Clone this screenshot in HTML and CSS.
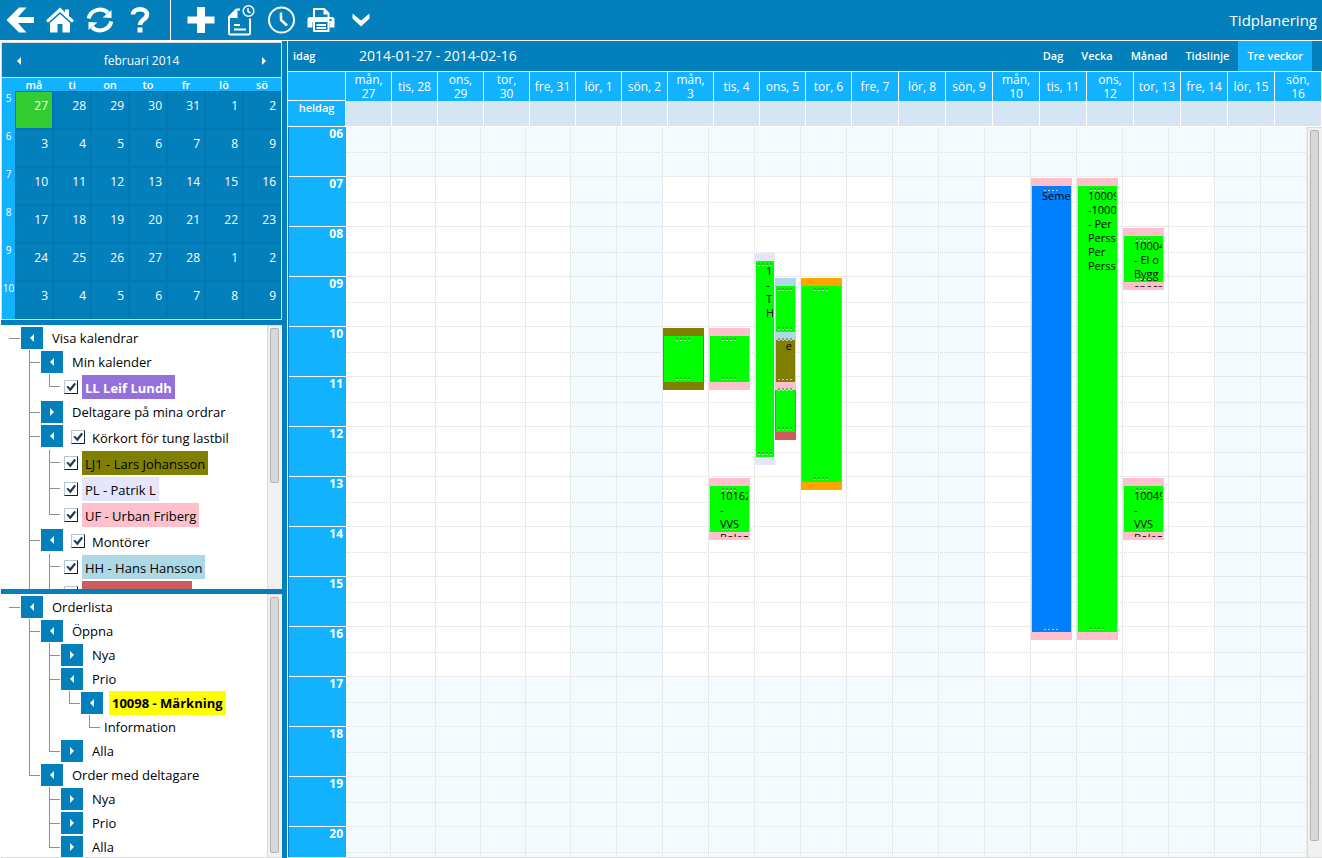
FILE: index.html
```html
<!DOCTYPE html>
<html lang="sv">
<head>
<meta charset="utf-8">
<title>Tidplanering</title>
<link rel="stylesheet" href="styles.css">
</head>
<body>
<header class="topbar">
  <nav class="tools">
    <button class="tool" aria-label="Tillbaka"><svg viewBox="0 0 28 28"><path d="M0.5 14 13 1.500h7.500l-8.500 9.500H28v6H12l8.500 9.500H13z"/></svg></button>
    <button class="tool" aria-label="Hem"><svg viewBox="0 0 28 28"><path d="M14 1.500 0 14.500l2 2.200L14 6l12 10.700 2-2.200-5-4.600V3.500h-4v2.700z"/><path d="M14 8 4 17v9.500h7.500V18h5v8.500H24V17z"/></svg></button>
    <button class="tool" aria-label="Uppdatera"><svg viewBox="0 0 28 28"><path class="line thick" d="M2.700 12.500A11.500 11 0 0 1 22 6.800M25.300 15.500A11.500 11 0 0 1 6 21.200"/><path d="M25.500 4v8l-9-.500zM2.500 24v-8l9 .500z"/></svg></button>
    <button class="tool" aria-label="Hjälp"><svg viewBox="0 0 28 28"><path class="line heavy" d="M7 8.500C7 1.500 21 1.500 21 8.500c0 5-7 5-7 10.500"/><path d="M11.500 21.500h5v5h-5z"/></svg></button>
  </nav>
  <nav class="tools tools-second">
    <button class="tool" aria-label="Ny"><svg viewBox="0 0 28 28"><path d="M10 1h8v9.500h9.500v7H18V27h-8v-9.500H.5v-7H10z"/></svg></button>
    <button class="tool" aria-label="Ny tidpost"><svg viewBox="0 0 28 28"><path class="line" d="M13 3.500H9.500L2 11v16q0 1.500 1.500 1.500h18q1.500 0 1.500-1.500V12.500M7 19h6M7 23.500h12"/><path d="M10.500 3.500V12H2z"/><circle class="line thin" cx="21.500" cy="5" r="5.300"/><path class="line thin" d="M21 2v3.500l2.500 1.500"/></svg></button>
    <button class="tool" aria-label="Tid"><svg viewBox="0 0 28 28"><circle class="line" cx="14.500" cy="14" r="12.500"/><path class="line mid" d="M14 6.500V14l6 5.500"/></svg></button>
    <button class="tool" aria-label="Skriv ut"><svg viewBox="0 0 28 28"><path class="line" d="M7 11V3h10l4.500 4.500V11"/><path d="M16.500 3v5.500h5z"/><path d="M3 11h22q2.500 0 2.500 2.500v8h-5V16h-17v5.500h-5v-8Q.5 11 3 11z"/><path class="line" d="M7 16v9h14.500v-9M9.500 19h9.500M9.500 22h9.500"/><path class="cut" d="M22.500 13h2v2h-2z"/></svg></button>
    <button class="tool" aria-label="Mer"><svg viewBox="0 0 28 28"><path d="M5.500 7.500 14 14.500l8.500-7v5L14 20.500l-8.500-8z"/></svg></button>
  </nav>
  <h1 class="page-title">Tidplanering</h1>
</header>

<div class="workspace">
  <aside class="sidebar">
    <section class="month">
      <div class="month-head">
        <button class="step prev" aria-label="Föregående månad"></button>
        <span>februari 2014</span>
        <button class="step next" aria-label="Nästa månad"></button>
      </div>
      <table class="month-table">
        <thead><tr><td></td><th>må</th><th>ti</th><th>on</th><th>to</th><th>fr</th><th>lö</th><th>sö</th></tr></thead>
        <tbody>
          <tr><th>5</th><td class="today">27</td><td>28</td><td>29</td><td>30</td><td>31</td><td>1</td><td>2</td></tr>
          <tr><th>6</th><td>3</td><td>4</td><td>5</td><td>6</td><td>7</td><td>8</td><td>9</td></tr>
          <tr><th>7</th><td>10</td><td>11</td><td>12</td><td>13</td><td>14</td><td>15</td><td>16</td></tr>
          <tr><th>8</th><td>17</td><td>18</td><td>19</td><td>20</td><td>21</td><td>22</td><td>23</td></tr>
          <tr><th>9</th><td>24</td><td>25</td><td>26</td><td>27</td><td>28</td><td>1</td><td>2</td></tr>
          <tr><th>10</th><td>3</td><td>4</td><td>5</td><td>6</td><td>7</td><td>8</td><td>9</td></tr>
        </tbody>
      </table>
    </section>

    <section class="tree-panel">
      <ul class="tree root">
        <li>
          <div class="node"><button class="toggle open" aria-label="Fäll ihop"></button><span class="label">Visa kalendrar</span></div>
          <ul class="tree">
            <li>
              <div class="node"><button class="toggle open" aria-label="Fäll ihop"></button><span class="label">Min kalender</span></div>
              <ul class="tree">
                <li><div class="node tall"><input type="checkbox" id="c-ll" checked><label class="label purple" for="c-ll">LL Leif Lundh</label></div></li>
              </ul>
            </li>
            <li><div class="node"><button class="toggle" aria-label="Fäll ut"></button><span class="label">Deltagare på mina ordrar</span></div></li>
            <li>
              <div class="node tall"><button class="toggle open" aria-label="Fäll ihop"></button><input type="checkbox" id="c-kor" checked><label class="label" for="c-kor">Körkort för tung lastbil</label></div>
              <ul class="tree">
                <li><div class="node tall"><input type="checkbox" id="c-lj" checked><label class="label olive" for="c-lj">LJ1 - Lars Johansson</label></div></li>
                <li><div class="node tall"><input type="checkbox" id="c-pl" checked><label class="label lavender" for="c-pl">PL - Patrik L</label></div></li>
                <li><div class="node tall"><input type="checkbox" id="c-uf" checked><label class="label pink" for="c-uf">UF - Urban Friberg</label></div></li>
              </ul>
            </li>
            <li class="continues">
              <div class="node tall"><button class="toggle open" aria-label="Fäll ihop"></button><input type="checkbox" id="c-mon" checked><label class="label" for="c-mon">Montörer</label></div>
              <ul class="tree">
                <li><div class="node tall"><input type="checkbox" id="c-hh" checked><label class="label lightblue" for="c-hh">HH - Hans Hansson</label></div></li>
                <li class="continues"><div class="node tall"><input type="checkbox" id="c-next" checked><label class="label red" for="c-next"></label></div></li>
              </ul>
            </li>
          </ul>
        </li>
      </ul>
      <div class="scrollbar"><div class="thumb short"></div></div>
    </section>

    <section class="tree-panel">
      <ul class="tree root">
        <li>
          <div class="node"><button class="toggle open" aria-label="Fäll ihop"></button><span class="label">Orderlista</span></div>
          <ul class="tree">
            <li>
              <div class="node"><button class="toggle open" aria-label="Fäll ihop"></button><span class="label">Öppna</span></div>
              <ul class="tree">
                <li><div class="node"><button class="toggle" aria-label="Fäll ut"></button><span class="label">Nya</span></div></li>
                <li>
                  <div class="node"><button class="toggle open" aria-label="Fäll ihop"></button><span class="label">Prio</span></div>
                  <ul class="tree">
                    <li>
                      <div class="node"><button class="toggle open" aria-label="Fäll ihop"></button><span class="label yellow">10098 - Märkning</span></div>
                      <ul class="tree">
                        <li><div class="node"><span class="label plain">Information</span></div></li>
                      </ul>
                    </li>
                  </ul>
                </li>
                <li><div class="node"><button class="toggle" aria-label="Fäll ut"></button><span class="label">Alla</span></div></li>
              </ul>
            </li>
            <li>
              <div class="node"><button class="toggle open" aria-label="Fäll ihop"></button><span class="label">Order med deltagare</span></div>
              <ul class="tree">
                <li><div class="node"><button class="toggle" aria-label="Fäll ut"></button><span class="label">Nya</span></div></li>
                <li><div class="node"><button class="toggle" aria-label="Fäll ut"></button><span class="label">Prio</span></div></li>
                <li><div class="node"><button class="toggle" aria-label="Fäll ut"></button><span class="label">Alla</span></div></li>
              </ul>
            </li>
          </ul>
        </li>
      </ul>
      <div class="scrollbar"><div class="thumb"></div></div>
    </section>
  </aside>

  <main class="schedule">
    <div class="viewbar">
      <button class="today-link">idag</button>
      <span class="range">2014-01-27 - 2014-02-16</span>
      <div class="views">
        <button>Dag</button><button>Vecka</button><button>Månad</button><button>Tidslinje</button><button class="active">Tre veckor</button>
      </div>
    </div>
    <div class="head-row">
      <div class="corner"></div>
      <div class="head-days">
        <span>mån,<br>27</span><span>tis, 28</span><span>ons,<br>29</span><span>tor,<br>30</span><span>fre, 31</span><span>lör, 1</span><span>sön, 2</span>
        <span>mån,<br>3</span><span>tis, 4</span><span>ons, 5</span><span>tor, 6</span><span>fre, 7</span><span>lör, 8</span><span>sön, 9</span>
        <span>mån,<br>10</span><span>tis, 11</span><span>ons,<br>12</span><span>tor, 13</span><span>fre, 14</span><span>lör, 15</span><span>sön,<br>16</span>
      </div>
    </div>
    <div class="head-row allday">
      <div class="corner">heldag</div>
      <div class="head-days">
        <span></span><span></span><span></span><span></span><span></span><span></span><span></span><span></span><span></span><span></span><span></span><span></span><span></span><span></span><span></span><span></span><span></span><span></span><span></span><span></span><span></span>
      </div>
    </div>
    <div class="timeline">
      <div class="axis">
        <div>06</div><div>07</div><div>08</div><div>09</div><div>10</div><div>11</div><div>12</div><div>13</div><div>14</div><div>15</div><div>16</div><div>17</div><div>18</div><div>19</div><div>20</div>
      </div>
      <div class="board">
        <div class="hours">
          <div class="off"></div><div></div><div></div><div></div><div></div><div></div><div></div><div></div><div></div><div></div><div></div><div class="off"></div><div class="off"></div><div class="off"></div><div class="off"></div>
        </div>
        <div class="days">
          <div class="day"></div><div class="day"></div><div class="day"></div><div class="day"></div><div class="day"></div>
          <div class="day weekend"></div><div class="day weekend"></div>
          <div class="day"><div class="event olive" style="--start:10;--len:1"><div class="fill"></div></div></div>
          <div class="day">
            <div class="event pink" style="--start:10;--len:1"><div class="fill"></div></div>
            <div class="event pink" style="--start:13;--len:1"><div class="fill"></div><div class="text">10162<br>-<br>VVS<br>Bolag</div></div>
          </div>
          <div class="day">
            <div class="event lavender half" style="--start:8.5;--len:4"><div class="fill"></div><div class="text">1<br>-<br>T<br>H</div></div>
            <div class="event red half second" style="--start:11;--len:1"><div class="fill"></div></div>
            <div class="event pink half second" style="--start:10;--len:1"><div class="fill busy"></div><div class="text">e</div></div>
            <div class="event lightblue half second" style="--start:9;--len:1"><div class="fill"></div></div>
          </div>
          <div class="day"><div class="event orange" style="--start:9;--len:4"><div class="fill"></div></div></div>
          <div class="day"></div>
          <div class="day weekend"></div><div class="day weekend"></div>
          <div class="day"></div>
          <div class="day"><div class="event pink" style="--start:7;--len:9"><div class="fill leave"></div><div class="text">Seme</div></div></div>
          <div class="day"><div class="event pink" style="--start:7;--len:9"><div class="fill"></div><div class="text">10009<br>-1000<br>- Per<br>Perss<br>Per<br>Perss</div></div></div>
          <div class="day">
            <div class="event pink" style="--start:8;--len:1"><div class="fill"></div><div class="text">10004<br>- El o<br>Bygg<br>specs</div></div>
            <div class="event pink" style="--start:13;--len:1"><div class="fill"></div><div class="text">10049<br>-<br>VVS<br>Bolag</div></div>
          </div>
          <div class="day"></div>
          <div class="day weekend"></div><div class="day weekend"></div>
        </div>
      </div>
      <div class="scrollbar"><div class="thumb tall"></div></div>
    </div>
  </main>
</div>
</body>
</html>
```
FILE: styles.css
```css
:root {
  --blue: #0380bb;
  --dark: #0077b0;
  --cyan: #12b2ff;
  --off: #f4fbff;
  --hour: 50px;
}
* { box-sizing: border-box; }
body {
  margin: 0;
  height: 100vh;
  display: flex;
  flex-direction: column;
  overflow: hidden;
  background: #fff;
  color: #000;
  font: 12px/18px "Open Sans", "Noto Sans", sans-serif;
}
button {
  border: 0;
  padding: 0;
  background: none;
  color: inherit;
  font: inherit;
}
ul { list-style: none; margin: 0; padding: 0; }

/* Top bar */
.topbar {
  flex: none;
  display: flex;
  height: 41px;
  background: var(--blue);
  border-bottom: 1px solid #fff;
  color: #fff;
}
.tools {
  display: flex;
  align-items: center;
  gap: 12px;
  padding: 0 16px 0 6px;
}
.tools-second { border-left: 1px solid #fff; padding-left: 16px; }
.tool { width: 28px; height: 28px; }
.tool svg { display: block; width: 28px; height: 28px; fill: #fff; overflow: visible; }
.tool .line { fill: none; stroke: #fff; stroke-width: 2; stroke-linejoin: round; }
.tool .thin { stroke-width: 1.5; }
.tool .mid { stroke-width: 2.5; }
.tool .thick { stroke-width: 4; }
.tool .heavy { stroke-width: 4.5; }
.tool .cut { fill: var(--blue); }
.page-title {
  margin: 0 5px 0 auto;
  font-size: 15px;
  font-weight: 400;
  line-height: 40px;
}

.workspace { flex: 1; min-height: 0; display: flex; }

/* Sidebar */
.sidebar {
  flex: none;
  display: flex;
  flex-direction: column;
  width: 287px;
  padding: 1px 0 0 1px;
  border-right: 5px solid var(--blue);
}
.month {
  flex: none;
  border: 1px solid #dcdcdc;
  color: #fff;
}
.month-head {
  display: flex;
  align-items: center;
  justify-content: space-between;
  height: 35px;
  padding: 1px 15px 0;
  background: var(--blue);
  border-bottom: 1px solid #dcdcdc;
}
.step::before {
  content: "";
  display: block;
  border: 4px solid transparent;
}
.step.prev::before { border-left-width: 0; border-right-color: #fff; }
.step.next::before { border-right-width: 0; border-left-color: #fff; }
.month-table { width: 100%; table-layout: fixed; border-collapse: separate; border-spacing: 0; }
.month-table td, .month-table th { padding: 0; font-weight: 400; }
.month-table thead td { width: 13px; }
.month-table thead td, .month-table thead th {
  height: 13px;
  background: var(--cyan);
  font-size: 11px;
  line-height: 13px;
  font-weight: 600;
}
.month-table tbody th {
  background: var(--cyan);
  vertical-align: top;
  font-size: 10px;
  line-height: 14px;
}
.month-table tbody td {
  height: 38px;
  padding: 5px 4px 0 0;
  border: 1px solid var(--dark);
  background: var(--blue);
  text-align: right;
  vertical-align: top;
}
.month-table tbody .today { background: #33cc33; }

/* Trees */
.tree-panel {
  flex: 1 1 0;
  min-height: 0;
  display: flex;
  overflow: hidden;
  border-top: 5px solid var(--blue);
  font-size: 13px;
}
.tree-panel:last-child { border-bottom: 1px solid #dcdcdc; }
.tree.root { flex: 1; padding: 1px 0 0 8px; }
.tree .tree { margin-left: 8px; }
.tree li { position: relative; padding-left: 12px; }
.tree .tree > li::before {
  content: "";
  position: absolute;
  left: 0;
  top: 0;
  bottom: 0;
  border-left: 1px solid #8d9096;
}
.tree .tree > li:last-child:not(.continues)::before { bottom: auto; height: 12px; }
.node {
  display: flex;
  align-items: flex-start;
  height: 24px;
  white-space: nowrap;
}
.node::before {
  content: "";
  width: 11px;
  height: 12px;
  margin-left: -12px;
  margin-right: 1px;
  border-bottom: 1px solid #8d9096;
}
.node.tall { height: 26px; }
.toggle {
  display: grid;
  place-items: center;
  width: 22px;
  height: 22px;
  margin-top: 1px;
  background: var(--blue);
}
.toggle::before {
  content: "";
  border: 4px solid transparent;
  border-right-width: 0;
  border-left-color: #fff;
}
.toggle.open::before {
  border-right-width: 4px;
  border-left-width: 0;
  border-right-color: #fff;
}
.label {
  height: 24px;
  margin-left: 6px;
  padding: 0 3px;
  line-height: 24px;
}
.tall .label { margin: 1px 0 0 4px; line-height: 26px; }
.label.plain { margin-left: 0; }
.label.yellow { background: #ffff00; font-weight: 700; }
.purple { background: #9370db; color: #fff; font-weight: 700; }
.olive { background: #808000; }
.lavender { background: #e6e6fa; }
.pink { background: #ffc0cb; }
.lightblue { background: #add8e6; }
.orange { background: #ffa500; }
.red { background: #cd5c5c; }
.label.red { min-width: 110px; }
.node input {
  appearance: none;
  width: 14px;
  height: 14px;
  margin: 6px 0 0 3px;
  border: 1px solid #16202e;
  border-top-color: #b8c4d0;
  border-left-color: #b8c4d0;
  background: #fff;
}
.node input:checked::before {
  content: "";
  display: block;
  width: 12px;
  height: 12px;
  background: #1f3b57;
  clip-path: polygon(10% 45%, 28% 42%, 42% 58%, 78% 15%, 92% 25%, 45% 88%);
}
.node .toggle + input { margin-left: 8px; }

.scrollbar {
  flex: none;
  width: 15px;
  padding: 2px;
  background: #f1f1f1;
  border: solid #dcdcdc;
  border-width: 1px 0 0 1px;
}
.thumb {
  height: calc(100% - 2px);
  margin-right: 1px;
  background: #d8d8d8;
  border: 1px solid #b4b4b4;
  border-radius: 2px;
}
.thumb.short { height: 60%; }
.thumb.tall { height: 98%; }

/* Schedule */
.schedule {
  flex: 1;
  min-width: 0;
  display: flex;
  flex-direction: column;
  border-left: 1px solid #fff;
}
.viewbar {
  flex: none;
  display: flex;
  align-items: stretch;
  height: 31px;
  padding: 0 10px 0 5px;
  background: var(--blue);
  border-bottom: 1px solid #fff;
  color: #fff;
  font-size: 11px;
  font-weight: 600;
}
.today-link { width: 66px; text-align: left; }
.range { font-size: 14px; font-weight: 400; line-height: 30px; }
.views { display: flex; margin-left: auto; }
.views button { padding: 0 9px; }
.views .active { background: var(--cyan); }
.head-row {
  flex: none;
  display: flex;
  height: 29px;
  color: #fff;
}
.corner {
  flex: none;
  width: 58px;
  background: var(--cyan);
  border: solid #fff;
  border-width: 0 1px 1px 0;
}
.head-days {
  flex: 1;
  display: grid;
  grid-template-columns: repeat(11, minmax(0, 46fr)) repeat(10, minmax(0, 47fr));
}
.head-days span {
  display: grid;
  place-content: center;
  padding-top: 1px;
  background: var(--cyan);
  border: solid #fff;
  border-width: 0 1px 1px 0;
  line-height: 14px;
  text-align: center;
  white-space: nowrap;
}
.allday { height: 26px; }
.allday .corner { font-size: 11px; font-weight: 600; line-height: 14px; text-align: center; }
.allday .head-days span { background: #d6e5f4; }

.timeline {
  flex: 1;
  min-height: 0;
  display: flex;
  overflow: hidden;
  border-bottom: 1px solid #dcdcdc;
}
.axis { flex: none; width: 58px; border-left: 1px solid var(--blue); }
.axis div {
  height: var(--hour);
  padding-right: 3px;
  background: var(--cyan);
  border-bottom: 1px solid #fff;
  color: #fff;
  font-weight: 700;
  line-height: 14px;
  text-align: right;
}
.board { flex: 1; display: grid; align-items: start; }
.hours, .days { grid-area: 1 / 1; }
.hours div { height: var(--hour); border-bottom: 1px solid #ececec; }
.hours div::before {
  content: "";
  display: block;
  height: 25px;
  border-bottom: 1px dotted #dcdcdc;
}
.hours .off { background: var(--off); }
.days {
  display: grid;
  grid-template-columns: repeat(5, 45fr) repeat(16, 46fr);
  height: calc(var(--hour) * 15);
}
.day { position: relative; border-right: 1px solid #e9e9e9; }
.weekend {
  background: linear-gradient(rgba(0, 165, 255, .043), rgba(0, 165, 255, .043)) 0 50px / 100% 500px no-repeat;
}
.event {
  position: absolute;
  left: 0;
  top: calc((var(--start) - 6) * var(--hour) + 1px);
  width: 91%;
  height: calc(var(--len) * var(--hour) + 12px);
}
.event.half { width: 44%; }
.event.second { left: 44%; width: 47%; }
.fill {
  position: absolute;
  inset: 8px 1px;
  background: #00ff00;
}
.fill.busy { background: #808000; }
.fill.leave { background: #0080ff; }
.event::before, .event::after {
  content: "";
  position: absolute;
  z-index: 1;
  left: calc(50% - 7px);
  width: 14px;
  height: 3px;
  background:
    repeating-linear-gradient(90deg, rgba(110, 110, 110, .6) 0 2px, transparent 2px 4px) top / 100% 2px no-repeat,
    repeating-linear-gradient(90deg, rgba(235, 235, 235, .7) 0 2px, transparent 2px 4px) bottom / 100% 1px no-repeat;
}
.event::before { top: 10px; }
.event::after { bottom: 10px; }
.text {
  position: absolute;
  inset: 11px 2px 3px 11px;
  overflow: hidden;
  font-size: 11px;
  line-height: 14px;
  white-space: nowrap;
}
```
